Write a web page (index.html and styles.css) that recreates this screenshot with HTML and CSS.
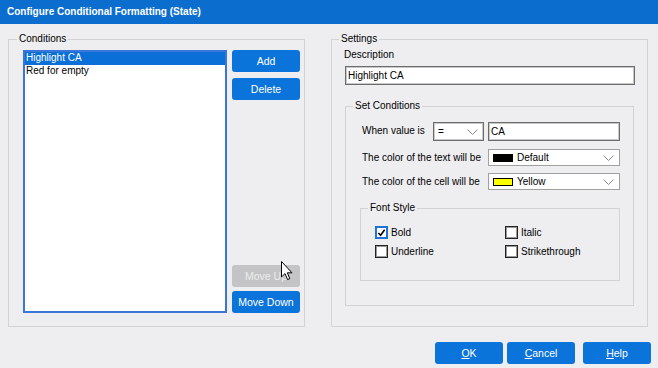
FILE: index.html
```html
<!DOCTYPE html>
<html lang="en">
<head>
    <meta charset="UTF-8">
    <title>Configure Conditional Formatting (State)</title>
    <link rel="stylesheet" href="styles.css">
</head>
<body>
    <div class="window">
        <div class="titlebar">Configure Conditional Formatting (State)</div>

        <div class="content">
            <div class="panes">
                <fieldset class="group conditions">
                    <legend>Conditions</legend>
                    <div class="conditions-body">
                        <ul class="listbox">
                            <li class="selected">Highlight CA</li>
                            <li>Red for empty</li>
                        </ul>
                        <div class="list-buttons">
                            <div class="btn-stack top">
                                <button class="btn">Add</button>
                                <button class="btn">Delete</button>
                            </div>
                            <div class="btn-stack bottom">
                                <button class="btn disabled">Move Up</button>
                                <button class="btn">Move Down</button>
                            </div>
                        </div>
                    </div>
                </fieldset>

                <fieldset class="group settings">
                    <legend>Settings</legend>
                    <div class="settings-body">
                        <div class="field-label">Description</div>
                        <div class="text-input wide">Highlight CA</div>

                        <fieldset class="group set-conditions">
                            <legend>Set Conditions</legend>
                            <div class="cond-grid">
                                <div class="cond-label">When value is</div>
                                <div class="select eq">
                                    <span>=</span>
                                    <svg class="chevron" width="11" height="6" viewBox="0 0 11 6"><polyline points="0.5,0.5 5.5,5.5 10.5,0.5" fill="none" stroke="#8a8a8a" stroke-width="1"/></svg>
                                </div>
                                <div class="text-input value">CA</div>

                                <div class="cond-label span">The color of the text will be</div>
                                <div class="select color">
                                    <span class="swatch black"></span>
                                    <span>Default</span>
                                    <svg class="chevron" width="11" height="6" viewBox="0 0 11 6"><polyline points="0.5,0.5 5.5,5.5 10.5,0.5" fill="none" stroke="#8a8a8a" stroke-width="1"/></svg>
                                </div>

                                <div class="cond-label span">The color of the cell will be</div>
                                <div class="select color">
                                    <span class="swatch yellow"></span>
                                    <span>Yellow</span>
                                    <svg class="chevron" width="11" height="6" viewBox="0 0 11 6"><polyline points="0.5,0.5 5.5,5.5 10.5,0.5" fill="none" stroke="#8a8a8a" stroke-width="1"/></svg>
                                </div>
                            </div>

                            <fieldset class="group font-style">
                                <legend>Font Style</legend>
                                <div class="check-grid">
                                    <label class="check">
                                        <span class="box checked">
                                            <svg width="10" height="10" viewBox="0 0 10 10"><path d="M1.5 5 L4 7.5 L8.5 1.5" fill="none" stroke="#000" stroke-width="1.8"/></svg>
                                        </span>
                                        Bold
                                    </label>
                                    <label class="check"><span class="box"></span>Italic</label>
                                    <label class="check"><span class="box"></span>Underline</label>
                                    <label class="check"><span class="box"></span>Strikethrough</label>
                                </div>
                            </fieldset>
                        </fieldset>
                    </div>
                </fieldset>
            </div>

            <div class="footer">
                <button class="btn"><u>O</u>K</button>
                <button class="btn"><u>C</u>ancel</button>
                <button class="btn help"><u>H</u>elp</button>
            </div>
        </div>

        <!-- mouse pointer over Move Up -->
        <svg class="cursor" width="13" height="20" viewBox="0 0 13 20">
            <path d="M0.5 0.5 L0.5 16 L4 12.6 L6.6 18.6 L8.8 17.6 L6.3 11.8 L11 11.8 Z" fill="#fff" stroke="#000" stroke-width="1"/>
        </svg>
    </div>
</body>
</html>
```

FILE: styles.css
```css
body {
    margin: 0;
    font-family: "Liberation Sans", Arial, sans-serif;
    font-size: 10px;
    color: #000;
    background: #eeeef1;
}

.window {
    position: relative;
    width: 658px;
    height: 368px;
    overflow: hidden;
    background: #eeeef1;
}

.titlebar {
    height: 24px;
    line-height: 24px;
    padding-left: 7px;
    background: #0b6ecf;
    color: #fff;
    font-size: 10px;
    font-weight: bold;
}

.content {
    padding: 9px 0 0 8px;
}

.panes {
    display: flex;
    gap: 26px;
}

fieldset.group {
    margin: 0;
    padding: 0;
    min-inline-size: 0;
    box-sizing: border-box;
    border: 1px solid #d3d3d6;
}

fieldset.group legend {
    padding: 0 2px;
    line-height: 12px;
}

/* Conditions */
.conditions {
    width: 297px;
    height: 294px;
}

.conditions legend {
    margin-left: 8px;
}

.conditions-body {
    display: flex;
    gap: 5px;
    padding: 5px 0 0 14px;
}

.listbox {
    width: 204px;
    height: 263px;
    margin: 0;
    padding: 0;
    list-style: none;
    box-sizing: border-box;
    border: 2px solid #3a76da;
    background: #fff;
}

.listbox li {
    height: 13px;
    line-height: 12px;
    padding-left: 1px;
}

.listbox li.selected {
    background: #0a6fd6;
    color: #fff;
}

.list-buttons {
    display: flex;
    flex-direction: column;
    justify-content: space-between;
    width: 68px;
}

.btn-stack {
    display: flex;
    flex-direction: column;
}

.btn-stack.top {
    gap: 6px;
}

.btn-stack.bottom {
    gap: 4px;
}

.btn {
    width: 68px;
    height: 22px;
    padding: 0;
    border: 0;
    border-radius: 3px;
    background: #0b74da;
    color: #fff;
    font-family: "Liberation Sans", Arial, sans-serif;
    font-size: 10.5px;
}

.btn.disabled {
    background: #c4c4c6;
    color: #ececec;
}

/* Settings */
.settings {
    width: 317px;
    height: 294px;
}

.settings legend {
    margin-left: 7px;
}

.settings-body {
    padding: 4px 12px 0 13px;
}

.field-label {
    line-height: 12px;
    margin-left: -1px;
}

.text-input {
    box-sizing: border-box;
    height: 19px;
    line-height: 17px;
    padding-left: 2px;
    border: 1px solid #6c6c6c;
    box-shadow: inset 0 0 0 1px #c9c9c9;
    background: #fff;
}

.text-input.wide {
    width: 290px;
    margin-top: 5px;
}

.set-conditions {
    width: 289px;
    height: 206px;
    margin-top: 15px !important;
}

.set-conditions legend {
    margin-left: 7px;
}

.cond-grid {
    display: grid;
    grid-template-columns: 71px 55px 132px;
    grid-template-rows: 20px 17px 17px;
    row-gap: 7px;
    padding: 10px 0 0 16px;
}

.cond-label {
    line-height: 17px;
}

.cond-label.span {
    grid-column: 1 / 3;
}

.select {
    position: relative;
    display: flex;
    align-items: center;
    box-sizing: border-box;
    background: #fff;
}

.select .chevron {
    position: absolute;
    right: 5px;
    top: 50%;
    margin-top: -3px;
}

.select.eq {
    width: 51px;
    height: 19px;
    padding-left: 4px;
    border: 1px solid #6c6c6c;
    box-shadow: inset 0 0 0 1px #c9c9c9;
}

.text-input.value {
    width: 132px;
}

.select.color {
    width: 132px;
    height: 17px;
    padding-left: 4px;
    gap: 4px;
    border: 1px solid #a0a0a0;
}

.swatch {
    width: 20px;
    height: 8px;
    box-sizing: border-box;
}

.swatch.black {
    background: #000;
}

.swatch.yellow {
    background: #ffff00;
    border: 1px solid #000;
}

.font-style {
    width: 260px;
    height: 79px;
    margin: 12px 0 0 14px !important;
}

.font-style legend {
    margin-left: 7px;
}

.check-grid {
    display: grid;
    grid-template-columns: 130px 120px;
    row-gap: 6px;
    padding: 12px 0 0 14px;
}

.check {
    display: flex;
    align-items: center;
    gap: 3px;
    line-height: 13px;
}

.box {
    display: flex;
    align-items: center;
    justify-content: center;
    width: 13px;
    height: 13px;
    box-sizing: border-box;
    border: 1px solid #222;
    box-shadow: inset 0 0 0 1px #9a9a9a;
    background: #fff;
}

.box.checked {
    border: 2px solid #1f72d8;
    box-shadow: none;
}

/* Footer buttons */
.footer {
    display: flex;
    justify-content: flex-end;
    gap: 4px;
    padding: 15px 7px 0 0;
}

.footer .btn.help {
    margin-left: 4px;
}

.cursor {
    position: absolute;
    left: 281px;
    top: 261px;
}
```
